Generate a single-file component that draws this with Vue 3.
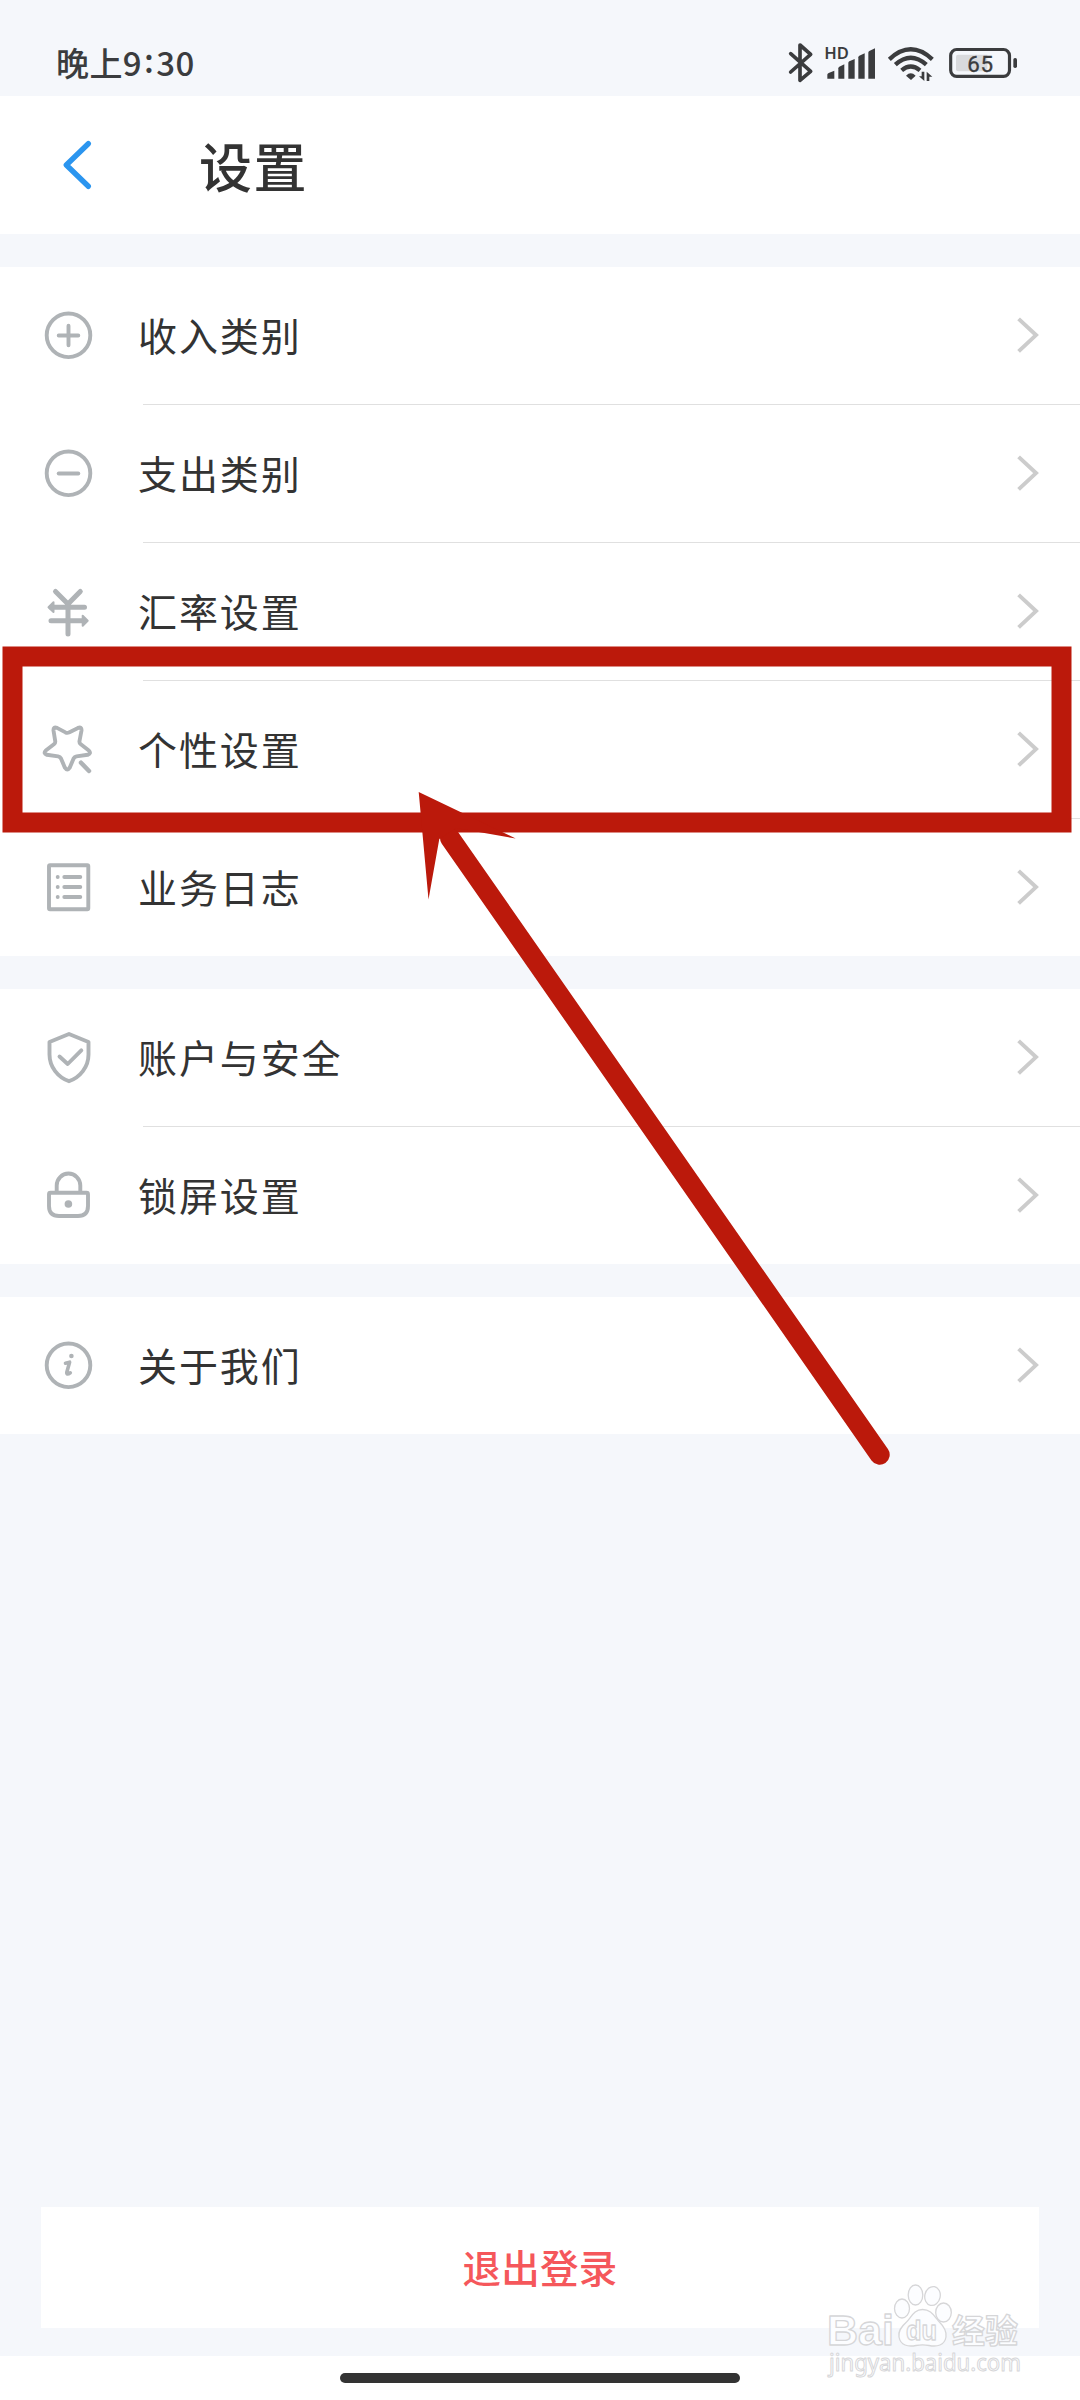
<script setup>
const groups = [
  [
    { label: '收入类别', icon: 'plus' },
    { label: '支出类别', icon: 'minus' },
    { label: '汇率设置', icon: 'rate' },
    { label: '个性设置', icon: 'star' },
    { label: '业务日志', icon: 'log' },
  ],
  [
    { label: '账户与安全', icon: 'shield' },
    { label: '锁屏设置', icon: 'lock' },
  ],
  [{ label: '关于我们', icon: 'info' }],
]
</script>

<template>
  <div class="screen">
    <header class="status">
      <div class="time">晚上9<span class="colon">:</span>30</div>
      <svg class="status-icons" viewBox="0 0 810 210">
        <path d="M62 71 L122 124 L90 151 V45 L122 73 L62 126" class="dark-line" stroke-width="11" />
        <text x="163" y="87" class="hd" textLength="74" lengthAdjust="spacingAndGlyphs">HD</text>
        <g fill="#3b3c3e">
          <path d="M172 146 V134 Q172 131 176 129 L193 122 V146 Z" />
          <path d="M205 146 V115 Q205 112 208 110 L223 103 V146 Z" />
          <path d="M235 146 V99 Q235 96 238 94 L254 87 V146 Z" />
          <path d="M265 146 V82 Q265 79 268 77 L284 70 V146 Z" />
          <path d="M295 146 V68 Q295 65 298 63 L315 55 V146 Z" />
        </g>
        <g class="dark-line wifi" stroke-width="13">
          <path d="M358 88 Q422 28 487 88" />
          <path d="M376 104 Q422 62 469 104" />
          <path d="M395 121 Q422 98 450 121" />
        </g>
        <path d="M408 137 Q422 123 437 137 L423 150 Z" fill="#3b3c3e" />
        <path d="M463 125 V153 L447 139 H455 V125 Z M470 153 V125 L487 140 H478 V153 Z" fill="#3b3c3e" />
        <path d="M564 74 H652 V124 H564 Q558 124 558 118 V80 Q558 74 564 74 Z" fill="#d9dadd" />
        <rect x="542" y="58.500" width="176.500" height="80.500" rx="18" class="dark-line" stroke-width="9.500" />
        <rect x="730" y="84" width="11" height="30" rx="5" fill="#3b3c3e" />
        <text x="592" y="125" class="level">65</text>
      </svg>
    </header>

    <nav class="titlebar">
      <svg class="back" width="40" height="60" viewBox="0 0 40 60">
        <path d="M28.300 8.700 L6.300 30 L28.300 51.300" />
      </svg>
      <h1>设置</h1>
    </nav>

    <section v-for="(group, g) in groups" :key="g" class="group">
      <div v-for="row in group" :key="row.icon" class="row">
        <svg class="icon" width="61" height="61" viewBox="0 0 61 61">
          <template v-if="row.icon === 'plus'">
            <circle cx="30.500" cy="30.300" r="21.800" />
            <path d="M20.700 30.500 H40.300 M30.500 20.700 V40.300" />
          </template>
          <template v-else-if="row.icon === 'minus'">
            <circle cx="30.500" cy="30.300" r="21.800" />
            <path d="M20.700 30.500 H40.300" />
          </template>
          <template v-else-if="row.icon === 'rate'">
            <path stroke-width="5" d="M17.500 10.500 L30 23 L42.300 10.500 M30 23 V53 M13 26.200 H46.500 M13 39.700 H46" />
            <path class="solid" d="M10.500 26.200 L15.500 21.300 V31.100 Z M49.700 39.700 L44.700 34.700 V44.700 Z" />
          </template>
          <template v-else-if="row.icon === 'star'">
            <path d="M19 8.900 L27.500 13.400 Q29.300 14.300 31 13.400 L40 8.900 Q43.800 7.300 43.500 11.500 L41.500 22 Q41.200 24 42.500 25 L50.800 31.500 Q53.600 34.600 49.800 35.800 L38.500 37.400 Q36.500 37.800 35.600 39.500 L31.700 48.700 Q29.300 52.300 26.900 48.700 L23 39.500 Q22.100 37.800 20.100 37.400 L8.800 35.800 Q5 34.600 7.800 31.500 L16.200 25 Q17.500 24 17.200 22 L15.500 11.500 Q15.200 7.300 19 8.900 Z" />
            <path stroke-width="4.500" d="M43 43.700 L51 52" />
          </template>
          <template v-else-if="row.icon === 'log'">
            <rect x="11" y="8.300" width="39.300" height="44" rx="1" />
            <path d="M19.700 20 h.01 M19.700 30 h.01 M19.700 40 h.01 M26.300 20 H42.300 M26.300 30 H42.300 M26.300 40 H42.300" />
          </template>
          <template v-else-if="row.icon === 'shield'">
            <path d="M31 7 L50.500 15 V27.500 C50.500 40 42 50.500 31 54.200 C20 50.500 11.500 40 11.500 27.500 V15 Z" />
            <path d="M21.500 29.500 L29.700 37 L43.300 23.300" />
          </template>
          <template v-else-if="row.icon === 'lock'">
            <path d="M18.700 27 V20.500 A11.800 12 0 0 1 42.300 20.500 V27" />
            <path d="M12.500 27.700 H48.500 Q50 27.700 50 29.200 V41 Q50 51 40 51 H21 Q11 51 11 41 V29.200 Q11 27.700 12.500 27.700 Z" />
            <circle class="solid" cx="30.400" cy="39" r="2.800" />
          </template>
          <template v-else>
            <circle cx="30.500" cy="30.300" r="21.800" />
            <circle class="dot" cx="33.400" cy="21" r="2.300" />
            <path stroke-width="3.600" d="M27.500 28.200 L31.600 27.200 L28.800 37.200 Q28.500 40.600 32.300 37.800" />
          </template>
        </svg>
        <span class="label">{{ row.label }}</span>
        <svg class="chevron" width="30" height="50" viewBox="0 0 30 50">
          <path d="M8.600 7.900 L26 24.100 L8.600 40.400" />
        </svg>
      </div>
    </section>

    <button class="logout">退出登录</button>

    <footer class="homebar"><i></i></footer>

    <svg class="annotation" width="1080" height="2400" viewBox="0 0 1080 2400">
      <rect x="12.500" y="656.500" width="1049" height="166" fill="none" stroke="#bb190b" stroke-width="20" />
      <path d="M450 838 L879.700 1454.700" stroke="#bb190b" stroke-width="20" stroke-linecap="round" />
      <path d="M418.700 792 L515.700 838.500 L456 828 L439.300 839 L428.500 899.500 Z" fill="#bb190b" />
    </svg>

    <svg class="watermark" width="220" height="125" viewBox="0 0 220 125">
      <g class="mark">
        <text x="17" y="69.500" class="brand" textLength="67" lengthAdjust="spacingAndGlyphs">Bai</text>
        <ellipse cx="92" cy="33.500" rx="7.500" ry="9.500" />
        <ellipse cx="105.500" cy="20" rx="7.300" ry="10" />
        <ellipse cx="122.500" cy="21" rx="7.700" ry="9.500" transform="rotate(12 122.500 21)" />
        <ellipse cx="133.500" cy="37.500" rx="7.800" ry="9.500" />
        <path d="M112.500 34.500 C121 34.500 124 41 128.500 46 C134 51.500 137 56 136 62 C134.500 70.500 127 72 119 70.500 C114 69.500 111 69.500 106 70.500 C98 72 90.500 70.500 89 62 C88 56 91 52 96.500 47 C101.500 42 104 34.500 112.500 34.500 Z" />
        <text x="96" y="65" class="du" textLength="31" lengthAdjust="spacingAndGlyphs">du</text>
        <text x="142" y="68" class="cn" textLength="66" lengthAdjust="spacingAndGlyphs">经验</text>
        <text x="19" y="95.500" class="url" textLength="192" lengthAdjust="spacingAndGlyphs">jingyan.baidu.com</text>
      </g>
    </svg>
  </div>
</template>

<style>
body {
  margin: 0;
  background: #f5f7fb;
}
</style>

<style scoped>
.screen {
  position: relative;
  width: 1080px;
  height: 2400px;
  display: flex;
  flex-direction: column;
  overflow: hidden;
  background: #f5f7fb;
  color: #333;
  font-family: "Noto Sans CJK SC", "Noto Sans", sans-serif;
}
.status {
  flex: none;
  height: 96px;
  display: flex;
  justify-content: space-between;
  padding: 0 40px 0 56px;
}
.time {
  font-size: 33px;
  line-height: 48px;
  padding-top: 38px;
  letter-spacing: 0.4px;
  font-weight: 500;
  color: #3b3c3e;
}
.colon {
  position: relative;
  top: -3px;
  padding: 0 2px;
}
.status-icons {
  width: 270px;
  height: 70px;
  margin-top: 30px;
}
.dark-line {
  fill: none;
  stroke: #3b3c3e;
  stroke-linecap: round;
  stroke-linejoin: round;
}
.wifi {
  stroke-linecap: butt;
}
.hd {
  font: 600 47px "Noto Sans", sans-serif;
  fill: #3b3c3e;
}
.level {
  font: 400 67px Roboto, sans-serif;
  fill: #3b3c3e;
  stroke: #3b3c3e;
  stroke-width: 1px;
  letter-spacing: 2px;
}
.titlebar {
  flex: none;
  height: 138px;
  display: flex;
  align-items: center;
  padding-left: 60px;
  background: #fff;
}
.back path {
  fill: none;
  stroke: #2b95ef;
  stroke-width: 5.400;
  stroke-linecap: round;
  stroke-linejoin: round;
}
h1 {
  margin: -1px 0 0 99px;
  font-size: 53px;
  line-height: 80px;
  letter-spacing: 1.500px;
  font-weight: 500;
}
.group {
  flex: none;
  margin-top: 33px;
  background: #fff;
}
.row {
  display: flex;
  align-items: center;
  height: 137px;
  padding-left: 38px;
  padding-right: 40px;
}
.row + .row {
  padding-top: 1px;
  background: linear-gradient(#e0e0e0, #e0e0e0) 143px 0 / 937px 1px no-repeat;
}
.icon {
  flex: none;
  fill: none;
  stroke: #afb3b6;
  stroke-width: 3.900;
  stroke-linecap: round;
  stroke-linejoin: round;
}
.solid {
  fill: #afb3b6;
  stroke-width: 2;
}
.dot {
  fill: #afb3b6;
  stroke: none;
}
.label {
  flex: 1;
  margin: -4px 0 0 39px;
  font-size: 39px;
  line-height: 60px;
  letter-spacing: 1.900px;
}
.chevron {
  fill: none;
  stroke: #ccc;
  stroke-width: 4;
}
.logout {
  flex: none;
  width: 998px;
  height: 121px;
  margin: auto 0 28px 41px;
  padding: 0 0 3px;
  border: 0;
  background: #fff;
  color: #f5575b;
  font: 500 38.500px "Noto Sans CJK SC", sans-serif;
  letter-spacing: 0.200px;
}
.homebar {
  flex: none;
  height: 44px;
  display: flex;
  justify-content: center;
  background: #fff;
}
.homebar i {
  width: 400px;
  height: 10px;
  margin-top: 17px;
  border-radius: 5px;
  background: #333;
}
.annotation {
  position: absolute;
  left: 0;
  top: 0;
}
.watermark {
  position: absolute;
  left: 810px;
  top: 2275px;
}
.mark {
  fill: #fcfdff;
  stroke: #d6d6d8;
  stroke-width: 1.300;
  stroke-linejoin: round;
}
.brand {
  font: 700 43px "Liberation Sans", sans-serif;
}
.du {
  font: 700 28px "Liberation Sans", sans-serif;
}
.cn {
  font: 700 33px "Noto Sans CJK SC", sans-serif;
}
.url {
  font: 400 24px "Noto Sans", sans-serif;
  stroke-width: 1;
}
</style>
